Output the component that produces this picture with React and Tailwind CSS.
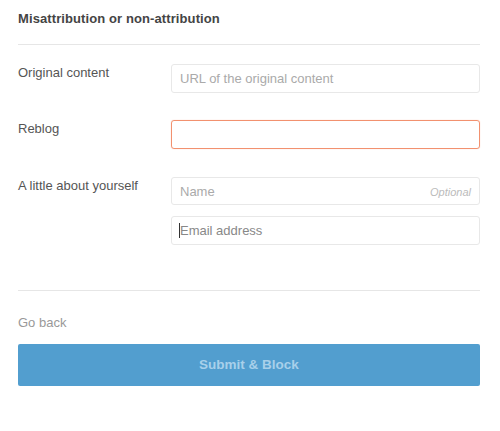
export default function App() {
  return (
    <div className="w-[500px] h-[431px] bg-white px-[18px] pt-[11px] font-['Liberation_Sans',Arial,sans-serif] text-[#555]">
      <h2 className="text-[13px] font-bold text-[#444] leading-[15px] tracking-[0.1px]">Misattribution or non-attribution</h2>
      <div className="h-px bg-[#e6e6e6] mt-[18px] mr-[2px]" />

      <div className="mt-[19px] mr-[2px] flex flex-col">
        <div className="flex">
          <label className="w-[153px] text-[13px] pt-[1px] leading-[16px]">Original content</label>
          <input
            placeholder="URL of the original content"
            className="flex-1 h-[29px] border border-[#e8e8e8] rounded-[3px] px-[8px] text-[13px] text-[#555] placeholder:text-[#aaa] outline-none"
          />
        </div>

        <div className="flex mt-[27px]">
          <label className="w-[153px] text-[13px] pt-[1px] leading-[16px]">Reblog</label>
          <input className="flex-1 h-[29px] border border-[#f2916f] rounded-[3px] px-[8px] text-[13px] shadow-[0_0_1px_#f7b9a3] outline-none" />
        </div>

        <div className="flex mt-[28px]">
          <label className="w-[153px] text-[13px] pt-[1px] leading-[16px]">A little about yourself</label>
          <div className="flex-1 flex flex-col gap-[11px]">
            <div className="relative">
              <input
                placeholder="Name"
                className="w-full h-[28px] border border-[#e8e8e8] rounded-[3px] px-[8px] text-[13px] placeholder:text-[#aaa] outline-none"
              />
              <span className="absolute right-[9px] top-[7px] text-[11px] italic text-[#bbb]">Optional</span>
            </div>
            <div className="relative">
              <input
                placeholder="Email address"
                className="w-full h-[29px] border border-[#e8e8e8] rounded-[3px] px-[8px] text-[13px] placeholder:text-[#888] outline-none"
              />
              <span className="absolute left-[8px] top-[7px] w-px h-[15px] bg-[#333]" />
            </div>
          </div>
        </div>
      </div>

      <div className="h-px bg-[#e6e6e6] mt-[45px] mr-[2px]" />

      <div className="mt-[24px] text-[13px] text-[#999] leading-[16px]">Go back</div>

      <button className="mt-[13px] w-[462px] h-[42px] rounded-[2px] bg-[#529ecf] text-[13.5px] font-bold text-[#a8d0ea]">
        Submit &amp; Block
      </button>
    </div>
  );
}
